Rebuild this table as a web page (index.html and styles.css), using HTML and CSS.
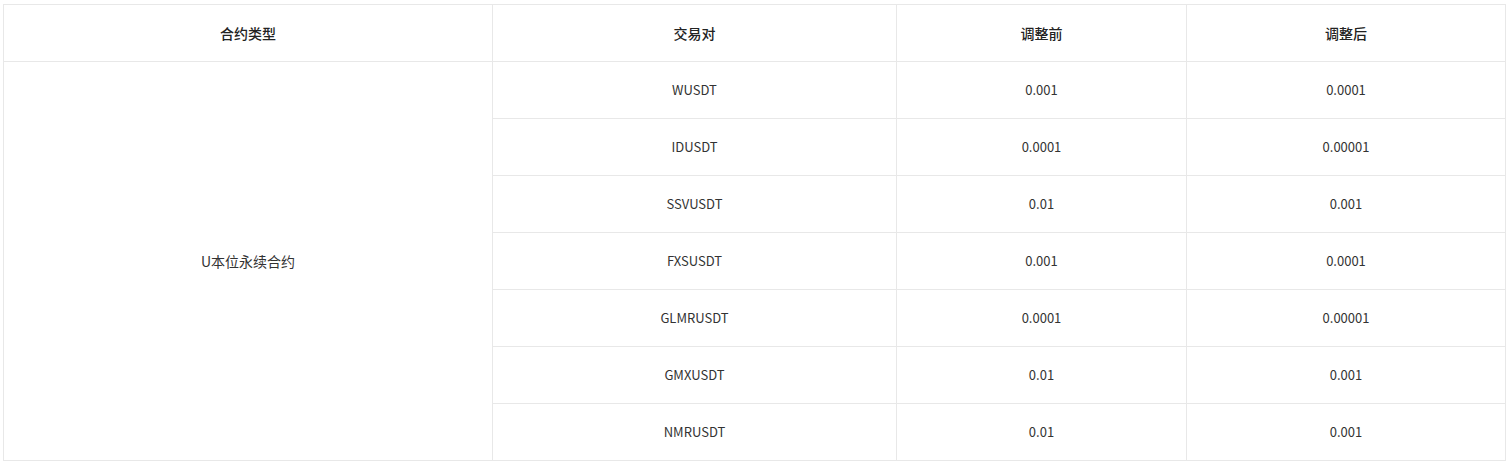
FILE: index.html
```html
<!DOCTYPE html>
<html lang="zh-CN">
<head>
<meta charset="utf-8">
<title>合约类型</title>
<link rel="stylesheet" href="styles.css">
</head>
<body>
<table class="tick-table">
  <colgroup>
    <col class="c1"><col class="c2"><col class="c3"><col class="c4">
  </colgroup>
  <thead>
    <tr><th>合约类型</th><th>交易对</th><th>调整前</th><th>调整后</th></tr>
  </thead>
  <tbody>
    <tr><td rowspan="7">U本位永续合约</td><td>WUSDT</td><td>0.001</td><td>0.0001</td></tr>
    <tr><td>IDUSDT</td><td>0.0001</td><td>0.00001</td></tr>
    <tr><td>SSVUSDT</td><td>0.01</td><td>0.001</td></tr>
    <tr><td>FXSUSDT</td><td>0.001</td><td>0.0001</td></tr>
    <tr><td>GLMRUSDT</td><td>0.0001</td><td>0.00001</td></tr>
    <tr><td>GMXUSDT</td><td>0.01</td><td>0.001</td></tr>
    <tr><td>NMRUSDT</td><td>0.01</td><td>0.001</td></tr>
  </tbody>
</table>
</body>
</html>
```
FILE: styles.css
```css
html, body {
  background: #ffffff;
}
body {
  margin: 4px 3px;
  font-family: "Noto Sans CJK SC", "Noto Sans", sans-serif;
  font-size: 13px;
  color: #333333;
}
.tick-table {
  width: 1502px;
  table-layout: fixed;
  border-collapse: collapse;
}
.c1 { width: 489px; }
.c2 { width: 404px; }
.c3 { width: 290px; }
.c4 { width: 319px; }
.tick-table th,
.tick-table td {
  height: 56px;
  padding: 0;
  border: 1px solid #e8e8e8;
  text-align: center;
  vertical-align: middle;
  line-height: 20px;
}
.tick-table th {
  font-weight: 500;
  font-size: 14px;
  color: #222222;
}
.tick-table td[rowspan] {
  font-size: 14px;
}
```
